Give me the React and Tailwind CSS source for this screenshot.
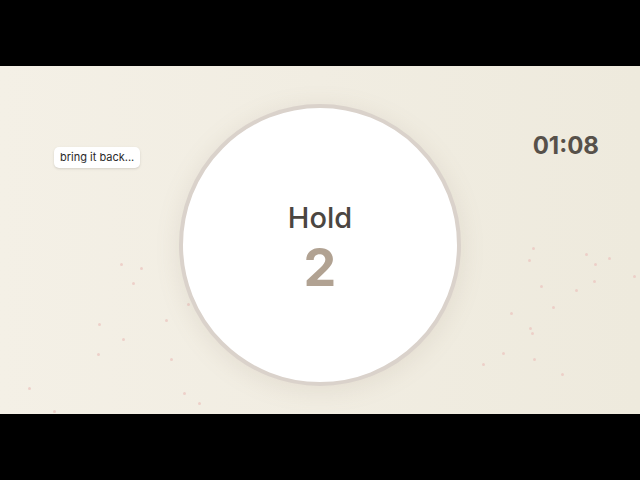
import React from "react";

const dots = [
  [120, 263], [140, 267], [132, 282], [98, 323], [122, 338], [97, 353], [165, 319],
  [170, 358], [28, 387], [53, 410], [183, 392], [198, 402], [187, 303],
  [532, 247], [528, 259], [585, 253], [594, 263], [608, 257], [633, 275], [593, 280],
  [575, 289], [540, 285], [552, 306], [510, 312], [529, 327], [531, 332], [502, 352],
  [482, 363], [533, 358], [561, 373],
];

const font = { fontFamily: "Inter, 'Open Sans', sans-serif" };

export default function App() {
  return (
    <div className="w-[640px] h-[480px] bg-black flex flex-col" style={font}>
      <div className="h-[66px] shrink-0" />
      <div className="relative h-[348px] shrink-0 overflow-hidden bg-gradient-to-r from-[#f4f0e6] via-[#f1ede2] to-[#eeeadd] flex justify-center pt-[38px]">
        {/* floating petals */}
        {dots.map(([x, y], i) => (
          <span
            key={i}
            className="absolute w-[3px] h-[3px] rounded-full bg-[#ebc8c2] opacity-80"
            style={{ left: x, top: y - 66 }}
          />
        ))}

        <div className="absolute left-[54px] top-[81px] bg-white rounded-[5px] px-[6px] h-[21px] flex items-center text-[11px] text-[#2a2a2a] shadow-sm">
          bring it back...
        </div>

        <div className="absolute right-[41px] top-[68px] text-[24px] font-bold text-[#57514a] leading-none">
          01:08
        </div>

        <div className="relative w-[282px] h-[282px] rounded-full border-[4px] border-[#dad2cb] bg-white shadow-[0_4px_24px_rgba(150,130,110,0.15)] flex flex-col items-center justify-center pt-[6px]">
          <div className="text-[29px] font-medium text-[#4b4641] leading-none mb-[10px]">Hold</div>
          <div className="text-[52px] font-bold text-[#b1a292] leading-none">2</div>
        </div>
      </div>
      <div className="flex-1" />
    </div>
  );
}
